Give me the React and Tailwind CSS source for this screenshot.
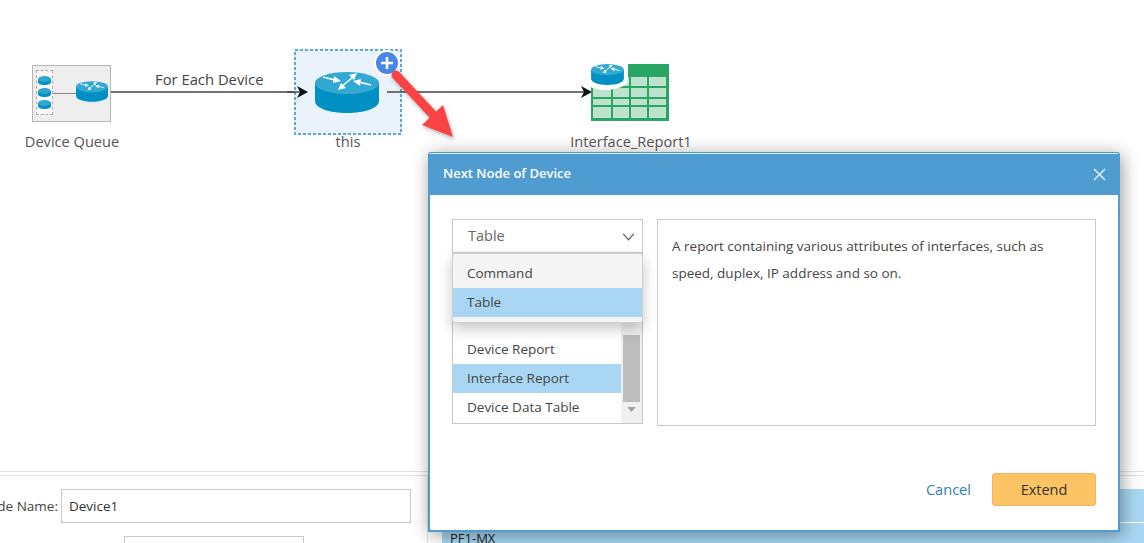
import React from "react";

const Router = ({ className }) => (
    <svg viewBox="0 0 64 41" className={className}>
        <path d="M0 11 V29 C0 36 14 41 32 41 C50 41 64 36 64 29 V11 Z" fill="#0090c4" />
        <ellipse cx="32" cy="11" rx="32" ry="11" fill="#32a9d2" />
        <g stroke="#fff" strokeWidth="1.6" fill="#fff">
            <path d="M8 5 L20 8" />
            <path d="M26 9 L19 4 L18 11 Z" stroke="none" />
            <path d="M56 13 L44 10" />
            <path d="M38 9 L45 14 L46 7 Z" stroke="none" />
            <path d="M26 15 L38 5" />
            <path d="M42 1 L34 3 L39 8 Z" stroke="none" />
            <path d="M23 18 L31 16 L26 11 Z" stroke="none" />
        </g>
    </svg>
);

const Disk = () => (
    <svg viewBox="0 0 13 9" className="w-[13px] h-[9px] block">
        <path d="M0 3 V6 C0 8 3 9 6.5 9 C10 9 13 8 13 6 V3 Z" fill="#0090c4" />
        <ellipse cx="6.5" cy="3" rx="6.5" ry="3" fill="#2ea6d0" />
    </svg>
);

const Edges = () => (
    <svg className="absolute left-0 top-0" width="1144" height="471">
        <line x1="110" y1="92" x2="300" y2="92" stroke="#444" strokeWidth="1.5" />
        <path d="M297 86 L308 92 L297 98 L300 92 Z" fill="#111" />
        <line x1="387" y1="92" x2="584" y2="92" stroke="#444" strokeWidth="1.5" />
        <path d="M581 86 L592 92 L581 98 L584 92 Z" fill="#111" />
    </svg>
);

const TableIcon = () => {
    const cols = [[593, 18], [613, 16], [631, 16], [649, 17]];
    const rows = [[77, 9], [88, 9], [99, 6], [107, 11]];
    return (
        <svg className="absolute left-0 top-0" width="1144" height="471">
            <rect x="591" y="64" width="78" height="57" fill="#27a763" />
            {rows.map((r) =>
                cols.map((c) => (
                    <rect key={r[0] + "-" + c[0]} x={c[0]} y={r[0]} width={c[1]} height={r[1]} fill="#bde3cd" />
                ))
            )}
            <path d="M587 60 H628 V82 C624 88 612 90 606 90 C598 90 591 88 587 85 Z" fill="#fff" />
        </svg>
    );
};

const Arrow = () => (
    <svg className="absolute left-0 top-0 drop-shadow-[1px_2px_2px_rgba(0,0,0,0.3)]" width="1144" height="543">
        <line x1="396" y1="75" x2="436" y2="118" stroke="#fb4343" strokeWidth="9" strokeLinecap="round" />
        <path d="M453 137 L422 125 L443 105 Z" fill="#fb4343" />
    </svg>
);

const Label = ({ children, className }) => (
    <span className={"absolute text-[14.6px] leading-[20px] text-[#555] whitespace-nowrap -translate-x-1/2 " + className}>
        {children}
    </span>
);

const Modal = () => (
    <div className="absolute left-[428px] top-[152px] w-[692px] h-[380px] flex flex-col bg-white border-2 border-t border-[#4f9cd0] rounded-t-[3px] shadow-[2px_3px_18px_rgba(0,0,0,0.4)]">
        <div className="h-[42px] shrink-0 flex items-center justify-between bg-[#4f9cd0] border-t border-[#e3f0f8] pl-[13px] pr-[12px] pb-[2px]">
            <span className="text-[13px] font-semibold text-white">Next Node of Device</span>
            <svg viewBox="0 0 14 14" className="w-[13px] h-[13px] mt-[2px]">
                <path d="M1 1 L13 13 M13 1 L1 13" stroke="#e4f0f8" strokeWidth="1.6" />
            </svg>
        </div>
        <div className="flex gap-[14px] pt-[24px] px-[22px]">
            <div className="relative w-[191px] flex flex-col">
                <div className="h-[34px] flex items-center justify-between pl-[15px] pr-[7px] pb-[1px] border border-[#c8c8c8] text-[14.5px] text-[#666]">
                    Table
                    <svg viewBox="0 0 14 9" className="w-[13px] h-[8px] mt-[2px]">
                        <path d="M1 1 L7 7.5 L13 1" fill="none" stroke="#666" strokeWidth="1.5" />
                    </svg>
                </div>
                <div className="h-[171px] flex border border-t-0 border-[#c8c8c8] text-[13.5px] text-[#444]">
                    <div className="flex-1 flex flex-col justify-end pb-[1px]">
                        <div className="h-[29px] flex items-center pl-[14px]">Device Report</div>
                        <div className="h-[29px] flex items-center pl-[14px] bg-[#a9d7f3]">Interface Report</div>
                        <div className="h-[29px] flex items-center pl-[14px]">Device Data Table</div>
                    </div>
                    <div className="w-[21px] flex flex-col items-center bg-[#f0f0f0]">
                        <div className="w-[17px] h-[67px] mt-[82px] bg-[#bdbdbd]" />
                        <svg viewBox="0 0 10 6" className="w-[9px] h-[5px] mt-[5px]">
                            <path d="M0 0 H10 L5 6 Z" fill="#a0a0a0" />
                        </svg>
                    </div>
                </div>
                <div className="absolute left-0 top-[34px] w-[191px] h-[70px] pt-[5px] flex flex-col bg-[#f5f5f5] border border-[#cfcfcf] rounded-[3px] text-[13.5px] text-[#444] shadow-[0_6px_14px_rgba(0,0,0,0.22)]">
                    <div className="h-[29px] flex items-center pl-[14px]">Command</div>
                    <div className="h-[29px] flex items-center pl-[14px] bg-[#a9d7f3]">Table</div>
                </div>
            </div>
            <div className="w-[439px] h-[207px] border border-[#c8c8c8] pt-[13px] px-[14px] text-[13.5px] leading-[27px] text-[#444]">
                A report containing various attributes of interfaces, such as speed, duplex, IP address and so on.
            </div>
        </div>
        <div className="flex items-center justify-end gap-[21px] mt-[47px] pr-[22px]">
            <span className="text-[14.6px] text-[#2f7fb3]">Cancel</span>
            <div className="w-[104px] h-[33px] flex items-center justify-center bg-[#fcc464] border border-[#eeb45f] rounded-[3px] text-[14.5px] text-[#333]">
                Extend
            </div>
        </div>
    </div>
);

const BottomPanel = () => (
    <div className="flex-1 flex border-t border-[#e2e2e2] mt-0">
        <div className="w-[428px] shrink-0 mt-[3px] border-t border-[#e2e2e2] border-r overflow-hidden">
            <div className="flex items-center gap-[3px] mt-[13px] -ml-[21px]">
                <span className="text-[13.5px] text-[#444] whitespace-nowrap">Node Name:</span>
                <div className="w-[350px] h-[34px] flex items-center pl-[7px] border border-[#c8c8c8] text-[13.5px] text-[#333]">Device1</div>
            </div>
            <div className="w-[180px] h-[20px] ml-[124px] mt-[13px] border border-[#c8c8c8]" />
        </div>
        <div className="flex-1 mt-[3px] border-t border-[#e2e2e2] pl-[14px] pt-[13px]">
            <div className="h-[33px] bg-[#a9d7f3]" />
            <div className="h-[21px] mt-[1px] pl-[8px] pt-[6px] bg-[#a9d7f3] text-[13px] leading-[18px] text-[#222]">PF1-MX</div>
        </div>
    </div>
);

const App = () => {
    return (
        <div className="relative w-[1144px] h-[543px] overflow-hidden flex flex-col bg-white font-['Open_Sans',sans-serif]">
            <div className="relative h-[471px] shrink-0">
                <Edges />
                <div className="absolute left-[32px] top-[65px] w-[79px] h-[57px] bg-[#eeeeee] border border-[#b5b5b5]">
                    <div className="absolute left-[3px] top-[4px] w-[17px] h-[45px] flex flex-col items-center justify-center gap-[3px] bg-[#f7f7f7] border border-dashed border-[#aaa]">
                        <Disk />
                        <Disk />
                        <Disk />
                    </div>
                    <div className="absolute left-[20px] top-[27px] w-[25px] h-px bg-[#888]" />
                    <Router className="absolute left-[43px] top-[15px] w-[32px] h-[21px]" />
                </div>
                <Label className="left-[72px] top-[131px]">Device Queue</Label>
                <span className="absolute left-[155px] top-[69px] text-[14.8px] leading-[20px] text-[#444]">For Each Device</span>

                <div className="absolute left-[294px] top-[49px] w-[108px] h-[86px] bg-[#eaf3fb]">
                    <svg width="108" height="86" className="block">
                        <rect x="1" y="1" width="106" height="84" fill="none" stroke="#5aa9d6" strokeWidth="2" strokeDasharray="3 2" />
                    </svg>
                </div>
                <svg className="absolute left-0 top-0" width="1144" height="140">
                    <line x1="287" y1="92" x2="300" y2="92" stroke="#444" strokeWidth="1.5" />
                    <path d="M297 86 L308 92 L297 98 L300 92 Z" fill="#111" />
                    <line x1="387" y1="92" x2="402" y2="92" stroke="#444" strokeWidth="1.5" />
                </svg>
                <Router className="absolute left-[315px] top-[72px] w-[64px] h-[41px]" />
                <div className="absolute left-[374px] top-[50px] w-[26px] h-[26px] flex items-center justify-center rounded-full bg-[#4a86e8] border-2 border-white">
                    <svg viewBox="0 0 14 14" className="w-[14px] h-[14px]">
                        <path d="M7 1 V13 M1 7 H13" stroke="#fff" strokeWidth="2.6" />
                    </svg>
                </div>
                <Label className="left-[348px] top-[131px]">this</Label>

                <TableIcon />
                <Router className="absolute left-[591px] top-[64px] w-[33px] h-[21px]" />
                <Label className="left-[631px] top-[131px]">Interface_Report1</Label>
            </div>
            <BottomPanel />
            <Modal />
            <Arrow />
        </div>
    );
};

export default App;
